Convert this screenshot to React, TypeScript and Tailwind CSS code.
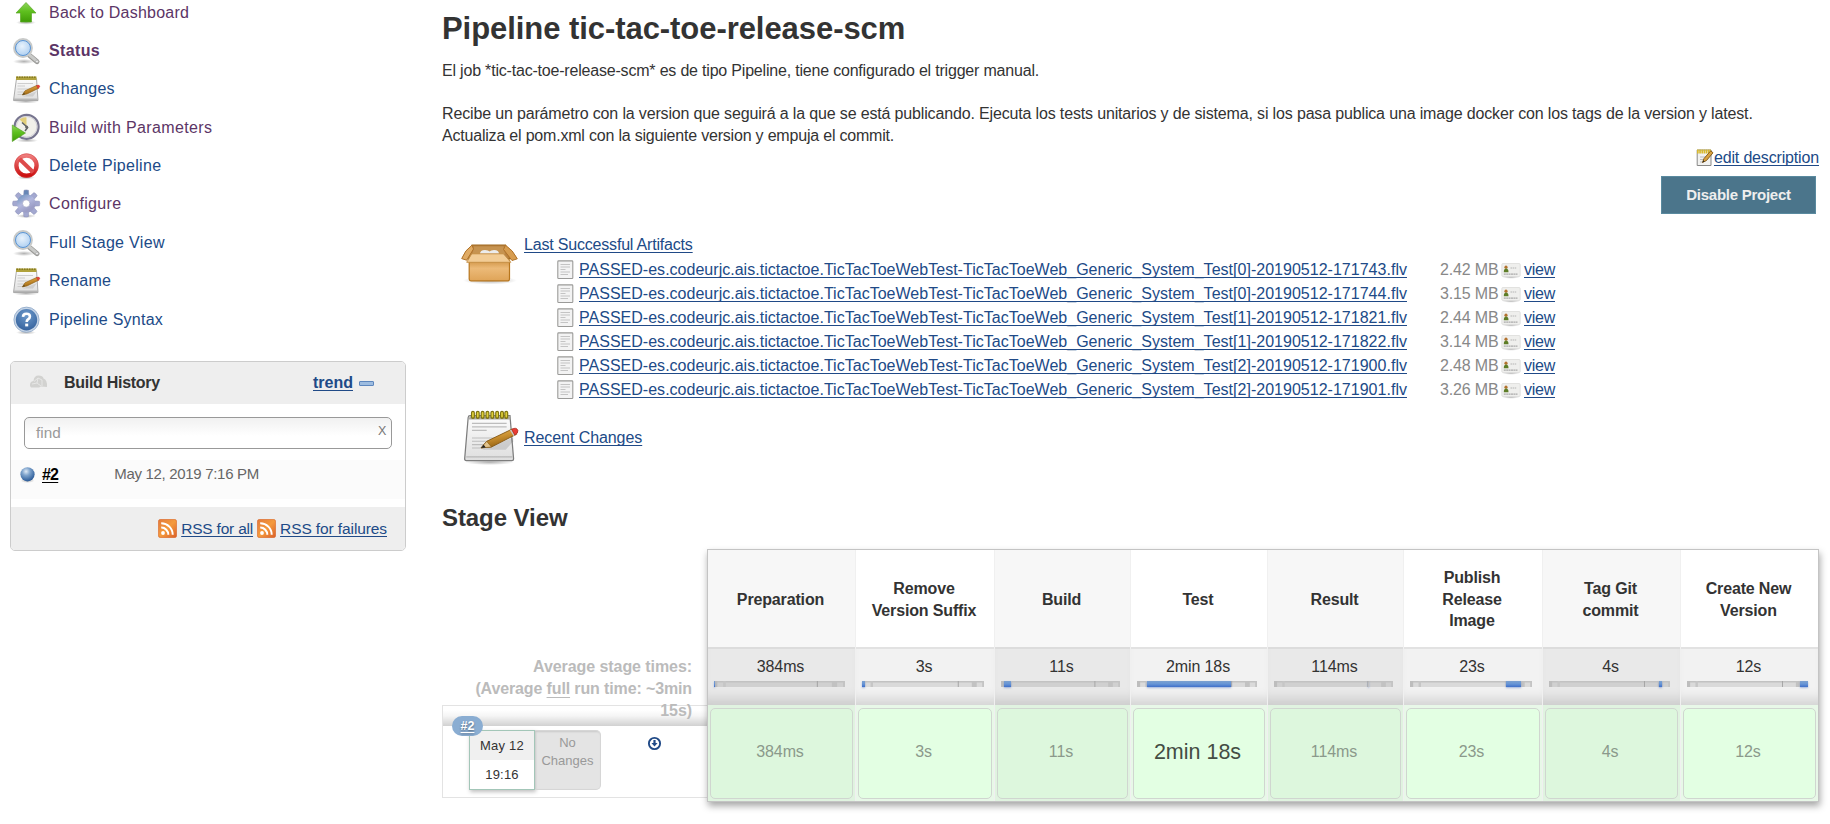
import type { ReactNode } from "react";

const link = "text-[#204a87] underline decoration-1 underline-offset-[2px] [text-decoration-skip-ink:none]";

function Defs() {
  return (
    <svg width="0" height="0" className="absolute">
      <defs>
        <linearGradient id="green" x1="0" y1="0" x2="0" y2="1">
          <stop offset="0" stopColor="#8fd35c" />
          <stop offset="0.45" stopColor="#5fc01f" />
          <stop offset="1" stopColor="#3f9c06" />
        </linearGradient>
        <radialGradient id="lens" cx="0.45" cy="0.4" r="0.6">
          <stop offset="0" stopColor="#e9f3fc" />
          <stop offset="1" stopColor="#a9ccf0" />
        </radialGradient>
        <linearGradient id="red" x1="0" y1="0" x2="0" y2="1">
          <stop offset="0" stopColor="#ee7b7b" />
          <stop offset="1" stopColor="#cc1111" />
        </linearGradient>
        <linearGradient id="gear" x1="0" y1="0" x2="0.6" y2="1">
          <stop offset="0" stopColor="#7f9cc6" />
          <stop offset="0.5" stopColor="#b3b8de" />
          <stop offset="1" stopColor="#9c9ec6" />
        </linearGradient>
        <radialGradient id="help" cx="0.5" cy="0.3" r="0.8">
          <stop offset="0" stopColor="#6d9acb" />
          <stop offset="1" stopColor="#2f5c98" />
        </radialGradient>
        <radialGradient id="ball" cx="0.4" cy="0.3" r="0.7">
          <stop offset="0" stopColor="#dfeaf6" />
          <stop offset="0.4" stopColor="#7ea3cc" />
          <stop offset="1" stopColor="#2a5a98" />
        </radialGradient>
        <linearGradient id="rss" x1="0" y1="0" x2="1" y2="1">
          <stop offset="0" stopColor="#e2793a" />
          <stop offset="0.5" stopColor="#f49a3c" />
          <stop offset="1" stopColor="#d95e28" />
        </linearGradient>
        <linearGradient id="box" x1="0" y1="0" x2="0" y2="1">
          <stop offset="0" stopColor="#cf9242" />
          <stop offset="0.4" stopColor="#ecba78" />
          <stop offset="1" stopColor="#dfa458" />
        </linearGradient>
        <linearGradient id="paper" x1="0" y1="0" x2="0" y2="1">
          <stop offset="0" stopColor="#fdfdfd" />
          <stop offset="1" stopColor="#dedede" />
        </linearGradient>
        <linearGradient id="pencil" x1="0" y1="0" x2="0.4" y2="1">
          <stop offset="0" stopColor="#eebd5e" />
          <stop offset="0.5" stopColor="#cc9232" />
          <stop offset="1" stopColor="#94600e" />
        </linearGradient>
        <radialGradient id="shade">
          <stop offset="0" stopColor="#000" stopOpacity="0.3" />
          <stop offset="1" stopColor="#000" stopOpacity="0" />
        </radialGradient>
      </defs>
    </svg>
  );
}

const box30 = { width: 30, height: 30, viewBox: "0 0 30 30" };

function UpArrow() {
  return (
    <svg {...box30}>
      <ellipse cx="15" cy="24.500" rx="10" ry="2.2" fill="url(#shade)" />
      <path d="M15 4.5 L25 15 H20.5 V24 H9.5 V15 H5 Z" fill="url(#green)" stroke="#5aa825" strokeWidth="0.7" strokeLinejoin="round" />
    </svg>
  );
}

function Magnifier() {
  return (
    <svg {...box30}>
      <ellipse cx="13" cy="25.500" rx="11" ry="2.600" fill="url(#shade)" />
      <path d="M18.500 19.300 L26 25.600" stroke="#9a9a97" strokeWidth="5" strokeLinecap="round" />
      <path d="M18.500 19 L26 25.300" stroke="#c9cac8" strokeWidth="3" strokeLinecap="round" />
      <circle cx="26" cy="25.500" r="1.400" fill="#eee" stroke="#999" strokeWidth="0.6" />
      <circle cx="12" cy="12" r="8.800" fill="url(#lens)" stroke="#c8cac9" strokeWidth="2.200" />
      <circle cx="12" cy="12" r="7.500" fill="none" stroke="#5b95d4" strokeWidth="1" />
    </svg>
  );
}

function SmallNotepad() {
  return (
    <svg {...box30}>
      <ellipse cx="15" cy="27.500" rx="13" ry="2" fill="url(#shade)" />
      <path d="M5.500 4.500 H25.500 L27 26.500 H2.500 Z" fill="url(#paper)" stroke="#a3a3a3" strokeWidth="0.9" />
      <path d="M2.800 25.300 H26.800" stroke="#b5b5b5" strokeWidth="1.500" />
      <path d="M5 2.500 H25.500 V6 H5 Z" fill="#b0a23c" />
      <path d="M5.500 3.200 H25.500" stroke="#857a22" strokeWidth="1.600" strokeDasharray="1.500 1" />
      <path d="M6.500 9.500 H22 M6.500 12 H14 M6.500 15 H19 M6.500 18 H14 M6.500 20.500 H11" stroke="#c9c9c9" strokeWidth="0.9" />
      <path d="M11.500 22.500 H22 L26 17 Z" fill="#000" opacity="0.1" />
      <path d="M11.300 21 L14 16.800 L26 11.300 L27.700 14.200 L16 20 Z" fill="url(#pencil)" stroke="#8c5f1a" strokeWidth="0.600" strokeLinejoin="round" />
      <path d="M11.300 21 L13 18.500 L14 20.300 Z" fill="#5d4a22" />
      <path d="M25.500 11.600 Q28.300 10.300 28.700 12.300 Q28.700 13.500 26.900 14.500 Z" fill="#e8443a" stroke="#c43a30" strokeWidth="0.500" />
    </svg>
  );
}

function LargeNotepad() {
  return (
    <svg width="57" height="57" viewBox="0 0 60 60" className="shrink-0">
      <ellipse cx="29" cy="56" rx="26" ry="3" fill="url(#shade)" />
      <path d="M8.500 7 H50.500 L54.300 52.500 Q54.300 54.300 52.500 54.300 H4.500 Q2.800 54.300 2.800 52.500 L6.500 9 Q6.700 7 8.500 7 Z" fill="url(#paper)" stroke="#7d7d7d" strokeWidth="1.300" />
      <path d="M8 7.500 H50.500 L51 11 H7.200 Z" fill="#aaa8a0" />
      <path d="M4.500 50.500 H53" stroke="#b8b8b8" strokeWidth="1.300" />
      <path d="M11.500 4 V8.500 M16.600 4 V8.500 M21.700 4 V8.500 M26.800 4 V8.500 M31.900 4 V8.500 M37 4 V8.500 M42.100 4 V8.500 M46.600 4 V8.500" stroke="#7d7211" strokeWidth="4.200" strokeLinecap="round" />
      <path d="M11.500 4 V8 M16.600 4 V8 M21.700 4 V8 M26.800 4 V8 M31.900 4 V8 M37 4 V8 M42.100 4 V8 M46.600 4 V8" stroke="#dfcf3a" strokeWidth="1.800" strokeLinecap="round" />
      <path d="M10.500 15.200 H47 M10.500 18.800 H47 M10.500 22.500 H26 M10.500 30.500 H47 M10.500 34 H40 M10.500 37.500 H24 M10.500 41 H20" stroke="#bdbdbd" strokeWidth="1.200" />
      <path d="M21 43 H46 L54 34 V30 Z" fill="#000" opacity="0.12" />
      <path d="M20 41 L26 34 L53 21 L57.500 26.500 L31 40 Z" fill="url(#pencil)" stroke="#805410" strokeWidth="0.900" strokeLinejoin="round" />
      <path d="M20 41 L26 34 L31 40 Z" fill="#e3c48c" stroke="#805410" strokeWidth="0.600" />
      <path d="M20 41 L22.800 37.700 L25 40.500 Z" fill="#222" />
      <path d="M50.500 22.300 L54.200 28.400 L55.800 27.500 L52 21.500 Z" fill="#c9c9c9" />
      <path d="M52.300 21.300 Q57.500 18.800 58.800 22.500 Q59.300 25.500 55.600 27.600 Z" fill="#ea3b35" stroke="#a83020" strokeWidth="0.800" />
    </svg>
  );
}

function ClockPlay() {
  return (
    <svg {...box30}>
      <ellipse cx="16" cy="27.500" rx="11" ry="2" fill="url(#shade)" />
      <circle cx="15.600" cy="13.800" r="12" fill="#f1f0ea" stroke="#77758f" strokeWidth="2.200" />
      <circle cx="15.600" cy="13.800" r="10.300" fill="none" stroke="#c9c8d3" strokeWidth="0.800" />
      <path d="M15.500 13 L8.500 6.500 A10 10 0 0 1 15.500 4.200 Z" fill="#e3cf7a" />
      <path d="M11 9.500 L16.600 14.500 L14 18" fill="none" stroke="#5e6262" strokeWidth="1.500" />
      <circle cx="15.600" cy="14" r="1.500" fill="#666" />
      <path d="M1.300 12 L14.500 20 L1.300 28.500 Z" fill="url(#green)" stroke="#4f9c1c" strokeWidth="0.600" />
    </svg>
  );
}

function Forbidden() {
  return (
    <svg {...box30}>
      <ellipse cx="15" cy="26.500" rx="9" ry="2" fill="url(#shade)" />
      <circle cx="15.500" cy="14.600" r="10" fill="#fff" stroke="url(#red)" strokeWidth="4.200" />
      <path d="M8.500 8 L22.200 21.200" stroke="#dd4a4a" strokeWidth="4" />
      <circle cx="15.500" cy="14.600" r="11.900" fill="none" stroke="#cf4040" strokeWidth="0.500" />
    </svg>
  );
}

function Gear() {
  const teeth = [0, 45, 90, 135, 180, 225, 270, 315];
  return (
    <svg {...box30}>
      <ellipse cx="15" cy="27" rx="10" ry="2" fill="url(#shade)" />
      {teeth.map((a) => (
        <path key={a} d="M12.600 7 L13 1.300 Q15.200 0.500 17.500 1.300 L17.900 7 Z" transform={`rotate(${a} 15.200 14.500)`} fill={a === 0 ? "#6787b6" : "#a3a8d0"} stroke="#868bb2" strokeWidth="0.5" />
      ))}
      <circle cx="15.200" cy="14.500" r="6.400" fill="none" stroke="url(#gear)" strokeWidth="5.800" />
      <circle cx="15.200" cy="14.500" r="3.700" fill="#fff" stroke="#8f94ba" strokeWidth="0.600" />
    </svg>
  );
}

function Help() {
  return (
    <svg {...box30}>
      <ellipse cx="15" cy="27.500" rx="10" ry="2" fill="url(#shade)" />
      <circle cx="15.500" cy="14.700" r="12.600" fill="#c5d4e6" stroke="#8da7c8" strokeWidth="0.800" />
      <circle cx="15.500" cy="14.700" r="10.700" fill="url(#help)" />
      <path d="M12 11.800 Q12.200 8.800 15.400 8.800 Q18.900 8.800 18.900 11.500 Q18.900 13.200 17 14.400 Q15.700 15.300 15.700 17" fill="none" stroke="#fff" strokeWidth="2.600" />
      <rect x="14.200" y="18.600" width="3" height="2.800" fill="#fff" />
    </svg>
  );
}

function Rss() {
  return (
    <svg width="19" height="19" viewBox="0 0 19 19">
      <rect x="0.300" y="0.300" width="18.400" height="18.400" rx="2.500" fill="url(#rss)" stroke="#d9672e" strokeWidth="0.600" />
      <circle cx="5" cy="14" r="1.900" fill="#fff" />
      <path d="M3.200 8.600 A7 7 0 0 1 10.300 15.800 M3.200 4.300 A11.400 11.400 0 0 1 14.700 15.800" fill="none" stroke="#fff" strokeWidth="2" />
    </svg>
  );
}

function Package() {
  return (
    <svg width="60" height="42" viewBox="0 0 60 42" className="shrink-0">
      <ellipse cx="30" cy="37.500" rx="27" ry="4" fill="url(#shade)" />
      <path d="M12 2 H45.500 L50 16 H8 Z" fill="#b98242" stroke="#a0691c" strokeWidth="1.200" strokeLinejoin="round" />
      <path d="M14 3.500 H43.500 L45 11 H12.500 Z" fill="#c69350" />
      <path d="M20 11 Q20 7 25 7 Q28.500 7 29.500 8.500 Q31 7 34 7 Q39 7 39 11 Z" fill="#ececec" />
      <path d="M9.200 17 H49.500 V36 Q49.500 37.800 47.700 37.800 H11 Q9.200 37.800 9.200 36 Z" fill="url(#box)" stroke="#b8761c" strokeWidth="1.200" />
      <path d="M12 2.200 Q5 7 1.700 15.600 L6.700 17.200 L13.500 6 Z" fill="#e0ab64" stroke="#b07228" strokeWidth="1" strokeLinejoin="round" />
      <path d="M45.500 2.200 Q53 7 57.300 15.800 L52 17.500 L43.500 6.500 Z" fill="#d79d50" stroke="#b07228" strokeWidth="1" strokeLinejoin="round" />
      <path d="M11.700 10.800 H43.500 L50.800 19.300 H6.700 Z" fill="#f2cc95" stroke="#c28c42" strokeWidth="0.900" strokeLinejoin="round" />
    </svg>
  );
}

function FileIcon() {
  return (
    <svg width="17" height="20" viewBox="0 0 17 20" className="shrink-0">
      <rect x="0.800" y="0.900" width="15" height="17.600" rx="0.8" fill="#f3f3f3" stroke="#9a9a98" strokeWidth="1.100" />
      <path d="M3.500 4.500 H13 M3.500 7 H13 M3.500 9.500 H8.500 M3.500 12 H13 M3.500 14.500 H11" stroke="#c4c4c4" strokeWidth="1.100" />
    </svg>
  );
}

function Card() {
  return (
    <svg width="20" height="20" viewBox="0 0 20 20" className="shrink-0">
      <ellipse cx="10" cy="17" rx="9" ry="1.800" fill="url(#shade)" />
      <rect x="0.800" y="3.500" width="18.400" height="13" rx="1.200" fill="#efefed" stroke="#dcdcda" strokeWidth="0.800" />
      <circle cx="5" cy="7.200" r="1.600" fill="#b3722e" />
      <path d="M2.800 12.300 Q2.800 8.600 5 8.600 Q7.500 8.600 7.500 12.300 Z" fill="#5d7d27" />
      <path d="M9.500 8 H15.500" stroke="#b5b5b5" strokeWidth="1.200" strokeDasharray="1.500 0.600" />
      <path d="M2.800 14.200 H16.500" stroke="#aaa" strokeWidth="1.200" strokeDasharray="2 0.400" />
    </svg>
  );
}

function EditIcon() {
  return (
    <svg width="18" height="19" viewBox="0 0 18 19" className="shrink-0">
      <path d="M1.200 2 H15 V17.500 H1.200 Z" fill="#f2f2f0" stroke="#888" strokeWidth="1" />
      <path d="M1 3.500 H15" stroke="#d8b92c" strokeWidth="4" strokeDasharray="1.700 0.500" />
      <path d="M4 9 H11 M4 11.500 H8 M4 14 H7" stroke="#bbb" strokeWidth="1" />
      <path d="M6.500 14.500 L8 10.500 L14.800 2.800 L17 4.800 L10.500 12.500 Z" fill="#d9a23f" stroke="#7d5412" strokeWidth="0.900" strokeLinejoin="round" />
      <path d="M6.500 14.500 L7.300 12.300 L8.500 13.400 Z" fill="#222" />
    </svg>
  );
}

const tasks: { label: string; icon: ReactNode; tone: string }[] = [
  { label: "Back to Dashboard", icon: <UpArrow />, tone: "text-[#5c3566] tracking-[0.24px]" },
  { label: "Status", icon: <Magnifier />, tone: "text-[#5c3566] font-bold tracking-[0.35px]" },
  { label: "Changes", icon: <SmallNotepad />, tone: "text-[#204a87] tracking-[0.25px]" },
  { label: "Build with Parameters", icon: <ClockPlay />, tone: "text-[#5c3566] tracking-[0.37px]" },
  { label: "Delete Pipeline", icon: <Forbidden />, tone: "text-[#204a87] tracking-[0.32px]" },
  { label: "Configure", icon: <Gear />, tone: "text-[#5c3566] tracking-[0.35px]" },
  { label: "Full Stage View", icon: <Magnifier />, tone: "text-[#204a87] tracking-[0.33px]" },
  { label: "Rename", icon: <SmallNotepad />, tone: "text-[#204a87] tracking-[0.3px]" },
  { label: "Pipeline Syntax", icon: <Help />, tone: "text-[#204a87] tracking-[0.25px]" },
];

function BuildHistory() {
  return (
    <section className="ml-[10px] mt-[22px] flex h-[190px] w-[396px] flex-col overflow-hidden rounded-[5px] border border-[#ccc] bg-white">
      <header className="flex h-[42px] shrink-0 items-center bg-[#eee] pl-[18px] pr-[31px] font-bold">
        <svg width="19" height="15" viewBox="0 0 19 15" className="-mt-[2px]">
          <path d="M1 12 Q0.500 7.500 4.500 7 Q5 1.500 9.500 1.500 Q14 1.500 14.500 4.500 Q18.500 6 18 13 L12 12.500 L10 13.500 H2 Z" fill="#d2d2d0" />
          <path d="M5 7.500 L9 4 L13 6 M9 4 L8 9 M13 6 V12 M3 10 L8 9 L12 12" stroke="#e9e9e8" strokeWidth="0.900" fill="none" />
        </svg>
        <span className="ml-[16px] tracking-[-0.28px] text-[#333]">Build History</span>
        <a className={`${link} ml-auto`}>trend</a>
        <span className="ml-[6px] mt-[2px] h-[5px] w-[15px] rounded-[1px] border border-[#5d86bd] bg-[#9dbce0]" />
      </header>
      <div className="h-[56px] shrink-0 px-[13px] pt-[13px]">
        <div className="flex h-[32px] items-center justify-between rounded-[5px] border border-[#999] bg-linear-to-b from-[#f1f1f1] to-white to-60% pl-[11px] pr-[5px] text-[15.300px] text-[#999]">
          <span>find</span>
          <span className="-mt-[3px] w-[8px] text-[12.500px] text-[#777]">X</span>
        </div>
      </div>
      <div className="flex h-[39px] shrink-0 items-start bg-[#fbfbfb] pl-[8px] pt-[4px]">
        <svg width="17" height="20" viewBox="0 0 17 20">
          <ellipse cx="8.500" cy="16.500" rx="7" ry="2.500" fill="url(#shade)" />
          <circle cx="8.500" cy="10.300" r="7.100" fill="url(#ball)" />
        </svg>
        <a className="ml-[6px] font-bold leading-[21px] tracking-[-0.8px] text-black underline decoration-1 underline-offset-[2px] [text-decoration-skip-ink:none]">#2</a>
        <span className="ml-[56px] text-[15px] leading-[20px] tracking-[-0.310px] text-[#666]">May 12, 2019 7:16 PM</span>
      </div>
      <footer className="mt-[8px] flex flex-1 items-center justify-end bg-[#eee] pr-[18px] pt-[1px] text-[15.500px]">
        <Rss />
        <a className={`${link} ml-[4px] mr-[4px] tracking-[-0.200px]`}>RSS for all</a>
        <Rss />
        <a className={`${link} ml-[4px] tracking-[-0.100px]`}>RSS for failures</a>
      </footer>
    </section>
  );
}

const artifacts = [
  ["[0]-20190512-171743", "2.42 MB"],
  ["[0]-20190512-171744", "3.15 MB"],
  ["[1]-20190512-171821", "2.44 MB"],
  ["[1]-20190512-171822", "3.14 MB"],
  ["[2]-20190512-171900", "2.48 MB"],
  ["[2]-20190512-171901", "3.26 MB"],
];

const stages = [
  { lines: ["Preparation"], time: "384ms", from: 0, to: 0.8 },
  { lines: ["Remove", "Version Suffix"], time: "3s", from: 0.3, to: 2.4 },
  { lines: ["Build"], time: "11s", from: 2.4, to: 8.3 },
  { lines: ["Test"], time: "2min 18s", from: 8.3, to: 78.7 },
  { lines: ["Result"], time: "114ms", from: 78.6, to: 79.3 },
  { lines: ["Publish", "Release", "Image"], time: "23s", from: 79, to: 91.2 },
  { lines: ["Tag Git", "commit"], time: "4s", from: 90.8, to: 93.4 },
  { lines: ["Create New", "Version"], time: "12s", from: 93.3, to: 100 },
];

function StageTable() {
  return (
    <div className="grid h-[253px] w-[1112px] grid-cols-[147px_139px_136px_137px_136px_139px_138px_138px] border border-[#c4c4c4] bg-[#f0f0f0] shadow-[1px_4px_7px_rgba(0,0,0,0.35)]">
      {stages.map((s, i) => {
        const odd = i % 2 === 0;
        const big = s.time === "2min 18s";
        return (
          <div key={s.time} className={`flex flex-col text-center ${i ? "border-l border-[#f0f0f0]" : ""}`}>
            <div className={`flex h-[97px] flex-col justify-center pr-[2px] pt-[3px] font-bold leading-[21.670px] tracking-[-0.150px] ${odd ? "bg-[#f7f7f7]" : "bg-white"}`}>
              {s.lines.map((l) => (
                <span key={l}>{l}</span>
              ))}
            </div>
            <div className={`h-[58px] border-t-2 pl-[6px] pr-[10px] pt-[7px] leading-[22px] shadow-[inset_0_-14px_12px_-8px_rgba(0,0,0,0.13)] ${odd ? "border-[#dcdcdc] bg-[#e9e9e9]" : "border-[#e2e2e2] bg-[#f2f2f2]"}`}>
              <div className="pl-[2px] tracking-[-0.100px]">{s.time}</div>
              <div className="relative mt-[3px] h-[6px] bg-[#d5d5d5]">
                <svg width="100%" height="6" preserveAspectRatio="none" viewBox="0 0 100 6" className="block">
                  <rect width="100" height="6" fill={odd ? "#d0d0d0" : "#dadada"} />
                  <rect width="100" height="1.500" fill="#c2c2c2" />
                  <rect x="0" width="2.600" height="6" fill="#bdbdbd" />
                  <rect x="7" width="2" height="6" fill="#c6c6c6" />
                  <rect x="78.500" width="0.800" height="6" fill="#a5a5a5" />
                  <rect x="90" width="4" height="6" fill="#c2c2c2" />
                  <rect x="98.500" width="1.500" height="6" fill="#c4c4c4" />
                </svg>
                <div
                  className="absolute top-0 h-[6px] bg-linear-to-b from-[#7ba0cf] via-[#6795d6] to-[#3f6fc9] shadow-[0_1px_2px_rgba(80,120,200,0.5)]"
                  style={{ left: `${s.from}%`, width: `${s.to - s.from}%` }}
                />
              </div>
            </div>
            <div className={`flex-1 p-[2px] pt-[3px] ${odd ? "bg-[#e0f3e0]" : "bg-[#e8f8e8]"}`}>
              <div
                className={`flex h-full items-center justify-center rounded-[5px] border border-[#d0d6d0] pb-[2px] pr-[3px] ${odd ? "bg-[#ddf7dd]" : "bg-[#e3ffe3]"} ${big ? "text-[21.500px] text-[#444d44]" : "tracking-[-0.100px] text-[#8b998b]"}`}
              >
                {s.time}
              </div>
            </div>
          </div>
        );
      })}
    </div>
  );
}

function RunColumn() {
  return (
    <div className="w-[265px] shrink-0 pt-[99px]">
      <div className="h-[57px] pr-[15px] pt-[8px] text-right font-bold leading-[22px] tracking-[-0.070px] text-[#bbb]">
        Average stage times:
        <br />
        <span className="tracking-[-0.130px]">
          (Average <span className="underline decoration-1 underline-offset-[3px]">full</span> run time: ~3min
        </span>
        <br />
        15s)
      </div>
      <div className="h-[93px] border border-r-0 border-[#e3e3e3]">
        <div className="h-[20px] bg-linear-to-b from-transparent from-20% via-black/4 to-black/18" />
        <div className="relative flex pl-[26px] pt-[4px] text-[13px]">
          <div className="h-[60px] w-[66px] border border-[#a3c6b8] bg-white text-center leading-[29px] shadow-[1px_2px_4px_rgba(0,0,0,0.25)]">
            <div className="h-[29px] bg-[#f0f0f0] tracking-[0.200px]">May 12</div>
            <div className="tracking-[0.200px]">19:16</div>
          </div>
          <div className="h-[60px] w-[66px] rounded-r-[5px] border border-l-0 border-[#d6d6d6] bg-[#e4e4e4] pt-[3px] text-center leading-[18px] text-[#999] shadow-[inset_1px_1px_2px_rgba(0,0,0,0.12)]">
            No
            <br />
            Changes
          </div>
          <svg width="15" height="15" viewBox="0 0 15 15" className="ml-[46px] mt-[6px]">
            <circle cx="7.500" cy="7.500" r="5.600" fill="none" stroke="#204a87" strokeWidth="1.900" />
            <path d="M6.400 4 H8.600 V7 H10.600 L7.500 10.600 L4.400 7 H6.400 Z" fill="#204a87" />
          </svg>
          <span className="absolute -top-[10px] left-[9px] flex h-[20px] w-[31px] items-center justify-center rounded-full bg-[#8aadd2] text-[12.500px] font-bold text-white underline decoration-1 underline-offset-[2px] [text-decoration-skip-ink:none] [text-shadow:0_1px_2px_rgba(0,0,0,0.4)]">
            #2
          </span>
        </div>
      </div>
    </div>
  );
}

export default function App() {
  return (
    <div className="flex h-[824px] w-[1830px] overflow-hidden bg-white font-['Liberation_Sans',Arial,sans-serif] text-[16px] leading-[22px] text-[#333]">
      <Defs />
      <aside className="w-[442px] shrink-0">
        <nav className="-mt-[6.700px]">
          {tasks.map((t) => (
            <a key={t.label} className={`flex h-[38.400px] items-center gap-[8px] pl-[11px] ${t.tone}`}>
              <span className="flex w-[30px] justify-center">{t.icon}</span>
              {t.label}
            </a>
          ))}
        </nav>
        <BuildHistory />
      </aside>
      <main className="w-[1377px] shrink-0">
        <h1 className="h-[59.600px] pt-[8px] text-[31px] font-bold leading-[41px] tracking-[-0.060px]">Pipeline tic-tac-toe-release-scm</h1>
        <div className="h-[87px] whitespace-nowrap leading-[21.670px] tracking-[-0.155px]">
          <span className="tracking-[-0.195px]">El job *tic-tac-toe-release-scm* es de tipo Pipeline, tiene configurado el trigger manual.</span>
          <br />
          <br />
          Recibe un parámetro con la version que seguirá a la que se está publicando. Ejecuta los tests unitarios y de sistema, si los pasa publica una image docker con los tags de la version y latest.
          <br />
          <span className="tracking-[-0.200px]">Actualiza el pom.xml con la siguiente version y empuja el commit.</span>
        </div>
        <div className="flex h-[22px] items-center justify-end">
          <EditIcon />
          <a className={`${link} tracking-[-0.160px]`}>edit description</a>
        </div>
        <div className="mt-[7px] flex justify-end pr-[3px]">
          <button className="h-[38px] w-[155px] border border-[#5a8a9f] bg-[#4b758b] text-[15px] font-bold tracking-[-0.260px] text-[#eee]">Disable Project</button>
        </div>
        <div className="mt-[19px] flex h-[169px]">
          <div className="w-[82px] shrink-0 pl-[18px] pt-[10px]">
            <Package />
          </div>
          <div>
            <a className={`${link} block leading-[24px] tracking-[-0.190px]`}>Last Successful Artifacts</a>
            <div className="mt-[1px]">
              {artifacts.map(([suffix, size]) => (
                <div key={suffix} className="flex h-[24.150px] items-center pl-[33px]">
                  <FileIcon />
                  <a className={`${link} ml-[5px] w-[861px] shrink-0 whitespace-nowrap tracking-[0.020px]`}>
                    {`PASSED-es.codeurjc.ais.tictactoe.TicTacToeWebTest-TicTacToeWeb_Generic_System_Test${suffix}.flv`}
                  </a>
                  <span className="w-[61px] whitespace-nowrap tracking-[-0.160px] text-[#888]">{size}</span>
                  <Card />
                  <a className={`${link} ml-[3px] tracking-[-0.250px]`}>view</a>
                </div>
              ))}
            </div>
          </div>
        </div>
        <div className="mt-[6px] flex h-[60px] items-center pl-[20px]">
          <LargeNotepad />
          <a className={`${link} ml-[5px] tracking-[-0.070px]`}>Recent Changes</a>
        </div>
        <h2 className="mt-[35px] h-[46px] text-[24px] font-bold leading-[30px] tracking-[-0.080px]">Stage View</h2>
        <div className="flex">
          <RunColumn />
          <StageTable />
        </div>
      </main>
    </div>
  );
}
